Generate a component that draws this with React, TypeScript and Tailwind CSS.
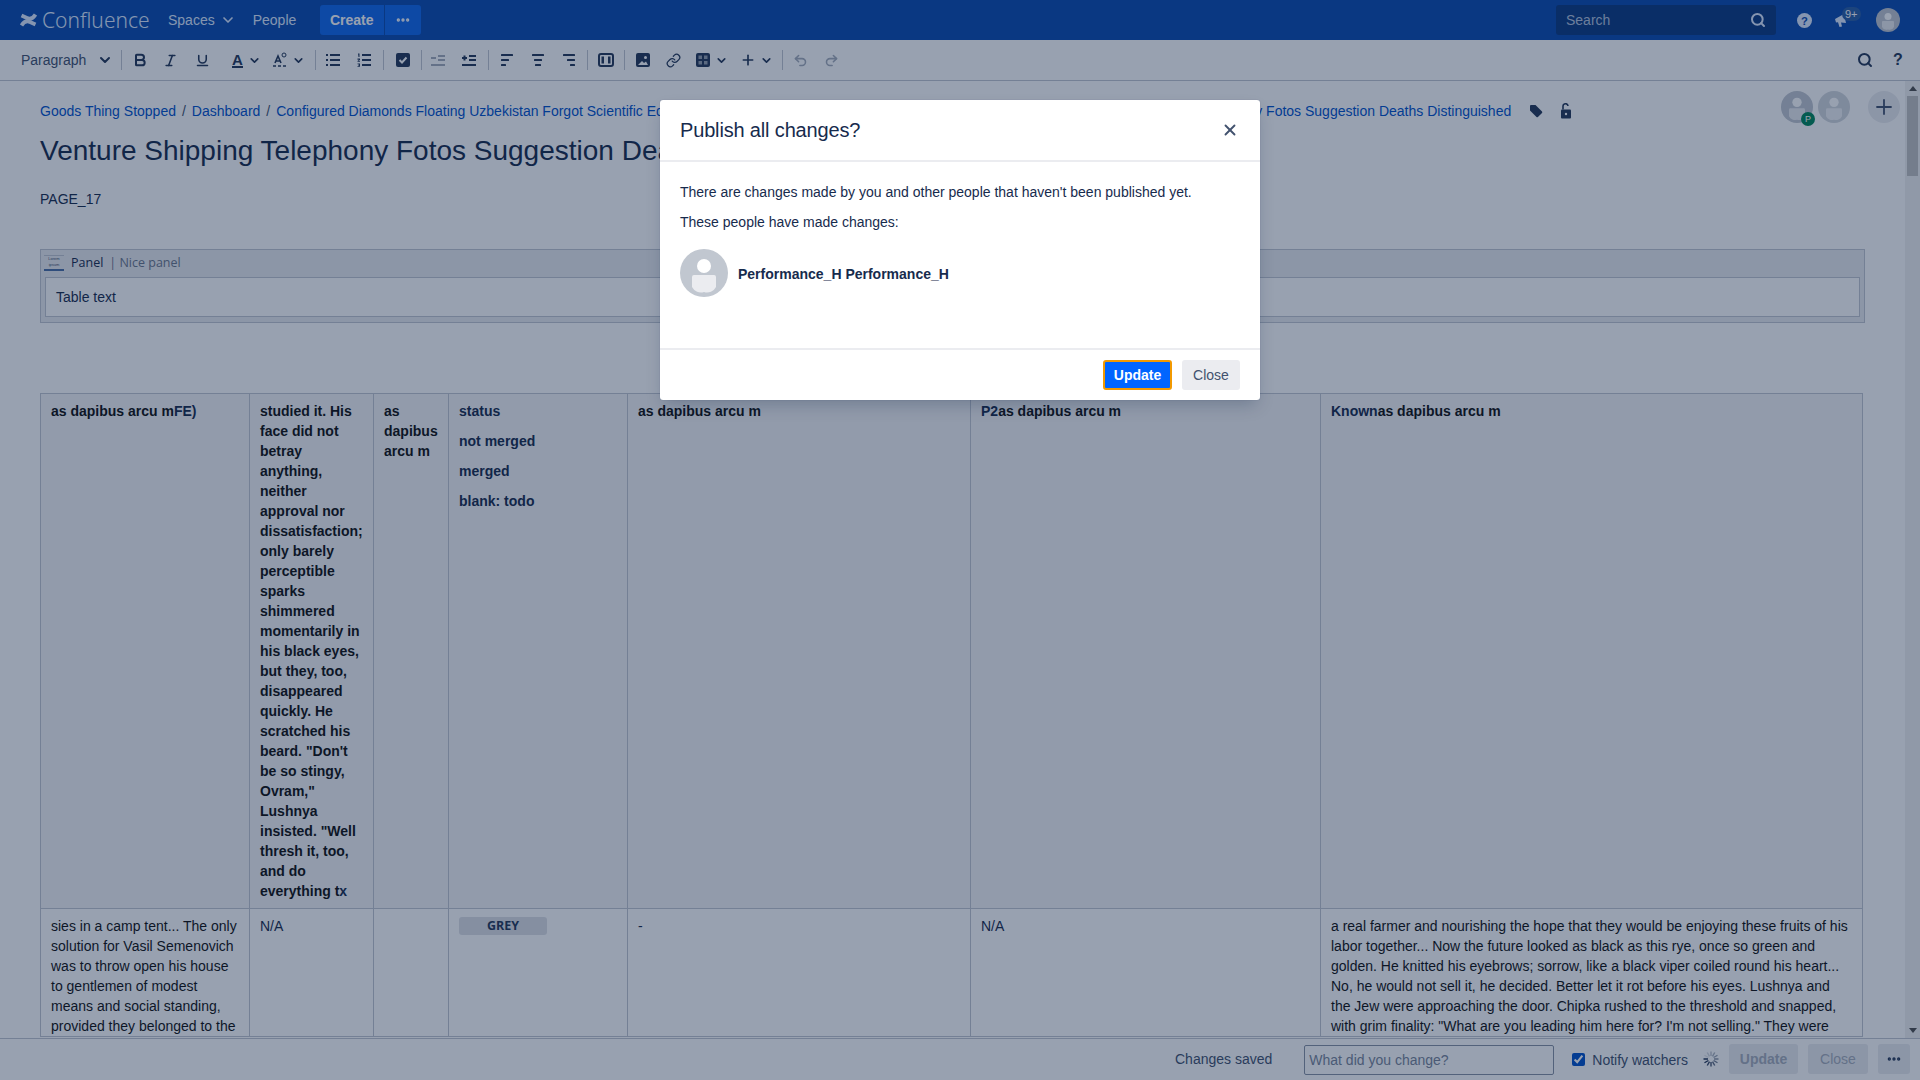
import { Bold, ChevronDown, Ellipsis, Italic, Link, Plus, Redo2, Search, Undo2, Underline, X } from "lucide-react";
import type { ReactNode } from "react";

const font = "font-['Liberation_Sans',Arial,sans-serif]";

function Avatar({ size }: { size: number }) {
    return (
        <svg width={size} height={size} viewBox="0 0 48 48">
            <circle cx="24" cy="24" r="24" fill="#c1c7d0" />
            <circle cx="24" cy="17" r="7" fill="#fff" />
            <path d="M12 28a2 2 0 0 1 2-2h20a2 2 0 0 1 2 2v10a10 10 0 0 1-12 5 10 10 0 0 1-12-5z" fill="#ebecf0" />
        </svg>
    );
}

function Logo() {
    return (
        <svg width="17" height="16" viewBox="0 0 17 16" fill="none" stroke="#deebff" strokeWidth="3.8">
            <path d="M1.500 13.500C4 9.500 7 8.500 10 10l5.500 2.500" />
            <path d="M15.500 2.500C13 6.500 10 7.500 7 6L1.500 3.500" />
        </svg>
    );
}

// toolbar button, width comes from the caller because the gaps differ
function Tool({ w, children, faded }: { w: string; children: ReactNode; faded?: boolean }) {
    return <div className={`${w} shrink-0 h-full flex items-center justify-center ${faded ? "text-[#a5adba]" : "text-[#253858]"}`}>{children}</div>;
}

function Sep() {
    return <div className="w-px h-[20px] bg-[#c1c7d0] shrink-0" />;
}

function Lines({ rows }: { rows: [number, number][] }) {
    return (
        <svg width="14" height="14" viewBox="0 0 14 14" fill="currentColor">
            {rows.map(([x, w], i) => (
                <rect key={i} x={x} y={1 + i * 5} width={w} height="2" rx="0.5" />
            ))}
        </svg>
    );
}

function Spinner() {
    return (
        <svg width="16" height="16" viewBox="0 0 16 16">
            {Array.from({ length: 12 }).map((_, i) => (
                <rect key={i} x="7.300" y="0.500" width="1.400" height="4.500" fill="#172b4d" opacity={0.12 + i / 12} transform={`rotate(${i * 30 - 60} 8 8)`} />
            ))}
        </svg>
    );
}

function Header() {
    return (
        <div className="h-10 shrink-0 bg-[#0b4ab0] flex items-center pl-5 pr-[20px] text-[#deebff] text-sm">
            <Logo />
            <span className="ml-[5px] w-[126px] font-['Noto_Sans',sans-serif] text-[21px] font-light leading-none text-[#deebff]">Confluence</span>
            <span className="">Spaces</span>
            <ChevronDown className="ml-[5px] w-4 h-4" strokeWidth={2.5} />
            <span className="ml-[17px] w-[67px]">People</span>
            <div className="h-[30px] w-[64px] bg-[#1068ec] rounded-l-[3px] text-white font-bold flex items-center justify-center">Create</div>
            <div className="h-[30px] w-[36px] ml-px bg-[#1068ec] rounded-r-[3px] text-white flex items-center justify-center">
                <Ellipsis className="w-4 h-4" strokeWidth={3} />
            </div>
            <div className="ml-auto h-[30px] w-[220px] bg-[#0b3982] rounded-[3px] flex items-center justify-between pl-[10px] pr-[10px] text-[#b3c3dd]">
                <span>Search</span>
                <Search className="w-4 h-4 text-[#deebff]" strokeWidth={3} />
            </div>
            <svg className="ml-[21px]" width="15" height="15" viewBox="0 0 16 16">
                <circle cx="8" cy="8" r="8" fill="#deebff" />
                <text x="8" y="12.500" textAnchor="middle" fontSize="12" fontWeight="700" fill="#0b4ab0" fontFamily="Liberation Sans">?</text>
            </svg>
            <div className="relative ml-[22px] w-[24px] h-6 flex items-center">
                <svg width="14" height="14" viewBox="0 0 14 14" fill="#deebff">
                    <path d="M1 6l9-5 2 9-5-.5 1 4-2.500.5L4 9.200 2 9.500z" />
                </svg>
                <span className="absolute left-[8px] top-[-1px] h-[14px] px-[3px] rounded-full bg-[#2a5fa8] text-[11px] leading-[14px] text-white">9+</span>
            </div>
            <div className="ml-[18px]"><Avatar size={24} /></div>
        </div>
    );
}

function Toolbar() {
    return (
        <div className="h-[41px] shrink-0 border-b border-[#c1c7d0] flex items-center pl-[21px] pr-[6px] text-[#42526e] text-sm">
            <span className="w-[76px] text-[#42526e]">Paragraph</span>
            <ChevronDown className="w-4 h-4 mr-[8px] text-[#253858]" strokeWidth={3} />
            <Sep />
            <div className="ml-[2px]" />
            <Tool w="w-[31px]"><Bold className="w-4 h-4" strokeWidth={3} /></Tool>
            <Tool w="w-[31px]"><Italic className="w-[15px] h-[15px]" strokeWidth={2.5} /></Tool>
            <Tool w="w-[32px]"><Underline className="w-[15px] h-[15px]" strokeWidth={2.5} /></Tool>
            <Tool w="w-[49px]">
                <div className="w-full flex items-center pl-[14px]">
                    <div className="font-bold leading-[13px] text-[15px] border-b-2 border-[#253858]">A</div>
                    <ChevronDown className="ml-[5px] w-[13px] h-[13px] shrink-0" strokeWidth={3} />
                </div>
            </Tool>
            <Tool w="w-[44px]">
                <div className="w-full flex items-center pl-[5px]">
                    <svg className="shrink-0" width="16" height="16" viewBox="0 0 16 16" fill="none" stroke="currentColor" strokeWidth="1.600">
                        <path d="M3 11l3-7 3 7M4 9h4" />
                        <path d="M1 14h3M6 14h3M11 14h3" />
                        <circle cx="12" cy="3" r="2" strokeWidth="1" />
                    </svg>
                    <ChevronDown className="ml-[4px] w-[13px] h-[13px] shrink-0" strokeWidth={3} />
                </div>
            </Tool>
            <div className="ml-[4px]" />
            <Sep />
            <Tool w="w-[34px]">
                <svg width="14" height="14" viewBox="0 0 14 14" fill="currentColor">
                    {[1, 6, 11].map((y) => (
                        <g key={y}>
                            <rect x="0" y={y} width="2" height="2" />
                            <rect x="4" y={y} width="10" height="2" />
                        </g>
                    ))}
                </svg>
            </Tool>
            <Tool w="w-[28px]">
                <svg width="14" height="14" viewBox="0 0 14 14" fill="currentColor">
                    <rect x="5" y="1" width="9" height="2" /><rect x="5" y="6" width="9" height="2" /><rect x="5" y="11" width="9" height="2" />
                    <path d="M1 .5h1.500v3.500h-1zM.5 5.500h2.500v1.500l-1.500 1h1.500v.8H.5V8l1.500-1.200H.5zM.5 10.500h2.500v3.300H.5V13h1.500v-.5H1v-.7h1v-.5H.5z" />
                </svg>
            </Tool>
            <div className="ml-[5px]" />
            <Sep />
            <Tool w="w-[37px]">
                <svg width="14" height="14" viewBox="0 0 14 14">
                    <rect width="14" height="14" rx="2" fill="currentColor" />
                    <path d="M3.500 7l2.500 2.500 4.500-5" stroke="#fff" strokeWidth="2" fill="none" />
                </svg>
            </Tool>
            <Sep />
            <Tool w="w-[32px]" faded>
                <svg width="14" height="14" viewBox="0 0 14 14" fill="currentColor">
                    <rect x="7" y="2" width="7" height="2" /><rect x="7" y="6" width="7" height="2" /><rect x="0" y="11" width="14" height="2" /><rect x="0" y="4" width="5" height="2" />
                </svg>
            </Tool>
            <Tool w="w-[30px]">
                <svg width="14" height="14" viewBox="0 0 14 14" fill="currentColor">
                    <rect x="7" y="2" width="7" height="2" /><rect x="7" y="6" width="7" height="2" /><rect x="0" y="11" width="14" height="2" /><rect x="0" y="4" width="5" height="2" /><rect x="1.500" y="2.500" width="2" height="5" />
                </svg>
            </Tool>
            <div className="ml-[4px]" />
            <Sep />
            <Tool w="w-[36px]"><Lines rows={[[1, 12], [1, 8], [1, 5]]} /></Tool>
            <Tool w="w-[26px]"><Lines rows={[[1, 12], [3, 8], [4, 6]]} /></Tool>
            <Tool w="w-[36px]"><Lines rows={[[1, 12], [5, 8], [8, 5]]} /></Tool>
            <Sep />
            <Tool w="w-[36px]">
                <svg width="16" height="14" viewBox="0 0 16 14" fill="none">
                    <rect x="1" y="1" width="14" height="12" rx="2" stroke="currentColor" strokeWidth="2" />
                    <rect x="3.500" y="3.500" width="2.500" height="7" fill="currentColor" />
                    <rect x="10" y="3.500" width="2.500" height="7" fill="currentColor" />
                </svg>
            </Tool>
            <Sep />
            <Tool w="w-[35px]">
                <svg width="14" height="14" viewBox="0 0 14 14">
                    <rect width="14" height="14" rx="2" fill="currentColor" />
                    <circle cx="9.500" cy="4.500" r="1.500" fill="#fff" />
                    <path d="M2 12l4-4 2 2 2-1.500 2 3.500z" fill="#fff" />
                </svg>
            </Tool>
            <Tool w="w-[26px]"><Link className="w-[15px] h-[15px]" strokeWidth={2} /></Tool>
            <Tool w="w-[44px]">
                <div className="w-full flex items-center pl-[10px]">
                    <svg className="shrink-0" width="14" height="14" viewBox="0 0 14 14" fill="none">
                        <rect width="14" height="14" rx="2" fill="currentColor" />
                        <rect x="2.500" y="2.500" width="3.500" height="3.500" fill="#97a0af" /><rect x="8" y="2.500" width="3.500" height="3.500" fill="#97a0af" /><rect x="2.500" y="8" width="3.500" height="3.500" fill="#97a0af" /><rect x="8" y="8" width="3.500" height="3.500" fill="#97a0af" />
                    </svg>
                    <ChevronDown className="ml-[5px] w-[13px] h-[13px] shrink-0" strokeWidth={3} />
                </div>
            </Tool>
            <Tool w="w-[52px]">
                <div className="w-full flex items-center pl-[10px]">
                    <Plus className="w-4 h-4 shrink-0" strokeWidth={2.5} />
                    <ChevronDown className="ml-[4px] w-[13px] h-[13px] shrink-0" strokeWidth={3} />
                </div>
            </Tool>
            <Sep />
            <Tool w="w-[35px]" faded><Undo2 className="w-[15px] h-[15px]" strokeWidth={2.5} /></Tool>
            <Tool w="w-[26px]" faded><Redo2 className="w-[15px] h-[15px]" strokeWidth={2.5} /></Tool>
            <div className="ml-auto flex items-center h-full">
                <Tool w="w-[34px]"><Search className="w-4 h-4" strokeWidth={3} /></Tool>
                <Tool w="w-[32px]"><span className="font-bold text-base">?</span></Tool>
            </div>
        </div>
    );
}

function Breadcrumbs() {
    return (
        <div className="absolute left-[40px] top-[14px] right-0 h-8 flex items-center text-sm text-[#0052cc]">
            <span>Goods Thing Stopped</span>
            <span className="mx-[6px] text-[#42526e]">/</span>
            <span>Dashboard</span>
            <span className="mx-[6px] text-[#42526e]">/</span>
            <span className="w-[1235px] whitespace-nowrap overflow-hidden flex justify-between">
                <span>Configured Diamonds Floating Uzbekistan Forgot Scientific Equipment</span>
                <span>Venture Shipping Telephony Fotos Suggestion Deaths Distinguished</span>
            </span>
            <svg className="ml-[18px]" width="14" height="14" viewBox="0 0 14 14" fill="#253858">
                <path d="M1 2a1 1 0 0 1 1-1h4.500l6.500 6.500a1 1 0 0 1 0 1.400l-4.100 4.100a1 1 0 0 1-1.400 0L1 6.500z" />
            </svg>
            <svg className="ml-[17px]" width="12" height="16" viewBox="0 0 12 16" fill="none">
                <rect x="1" y="6.500" width="10" height="9" rx="1" fill="#253858" />
                <path d="M3 6.500V3.500a2.500 2.500 0 0 1 5-.5" stroke="#253858" strokeWidth="1.600" />
                <circle cx="6" cy="11" r="1.200" fill="#fff" />
            </svg>
            <div className="ml-auto mr-[5px] mb-[8px] flex items-center">
                <div className="relative">
                    <Avatar size={32} />
                    <span className="absolute right-[-2px] bottom-[-3px] w-[14px] h-[14px] rounded-full bg-[#00875a] text-white text-[9px] leading-[14px] text-center">P</span>
                </div>
                <div className="ml-[5px] opacity-70"><Avatar size={32} /></div>
                <div className="ml-[18px] w-8 h-8 rounded-full bg-[#ebecf0] flex items-center justify-center text-[#42526e]">
                    <Plus className="w-6 h-6" strokeWidth={1.8} />
                </div>
            </div>
        </div>
    );
}

function Content() {
    const th = "border border-[#c1c7d0] bg-[#f4f5f7] align-top pt-[7px] pb-[7px] px-[10px] font-bold text-left";
    const td = "border border-[#c1c7d0] align-top pt-[7px] px-[10px] text-left";
    return (
        <div className="relative flex-1 min-w-0 overflow-hidden pl-[40px] pr-[40px] text-sm leading-5 text-[#172b4d]">
            <Breadcrumbs />
            <div className="pt-[50px] text-[28px] leading-10 whitespace-nowrap">Venture Shipping Telephony Fotos Suggestion Deaths Distinguished</div>
            <div className="mt-[18px]">PAGE_17</div>
            <div className="mt-[40px] h-[74px] border border-[#c1c7d0] bg-[#ebecf0] px-[4px]">
                <div className="h-[26px] mb-px flex items-center font-['Open_Sans',sans-serif] text-[12.5px]">
                    <div className="w-[20px] h-[16px] ml-[-1px] border-b-2 border-[#4a6fa5] border-t border-t-[#c1c7d0] text-[4px] leading-[6px] text-center text-[#42526e] font-['Liberation_Sans',sans-serif]">Lorem ipsum</div>
                    <span className="ml-[7px] text-[#172b4d]">Panel</span>
                    <span className="ml-[6px] text-[#6b778c]">| Nice panel</span>
                </div>
                <div className="h-[40px] border border-[#c1c7d0] bg-white px-[10px] flex items-center">Table text</div>
            </div>
            <table className="mt-[70px] table-fixed border-collapse w-[1822px]">
                <colgroup>
                    <col className="w-[209px]" />
                    <col className="w-[124px]" />
                    <col className="w-[75px]" />
                    <col className="w-[179px]" />
                    <col className="w-[343px]" />
                    <col className="w-[350px]" />
                    <col className="w-[542px]" />
                </colgroup>
                <tbody>
                    <tr>
                        <th className={th}><span className="text-[#111]">as dapibus arcu m</span>FE)</th>
                        <th className={th}>
                            <span className="text-[#111]">studied it. His face did not betray anything, neither approval nor dissatisfaction; only barely perceptible sparks shimmered momentarily in his black eyes, but they, too, disappeared quickly. He scratched his beard. "Don't be so stingy, Ovram," Lushnya insisted. "Well thresh it, too, and do everything t</span>x
                        </th>
                        <th className={`${th} text-[#111]`}>as dapibus arcu m</th>
                        <th className={th}>
                            <p>status</p>
                            <p className="mt-[10px]">not merged</p>
                            <p className="mt-[10px]">merged</p>
                            <p className="mt-[10px]">blank: todo</p>
                        </th>
                        <th className={`${th} text-[#111]`}>as dapibus arcu m</th>
                        <th className={th}>P2<span className="text-[#111]">as dapibus arcu m</span></th>
                        <th className={th}>Known<span className="text-[#111]">as dapibus arcu m</span></th>
                    </tr>
                    <tr>
                        <td className={`${td} text-[#111]`}>
                            sies in a camp tent... The only solution for Vasil Semenovich was to throw open his house to gentlemen of modest means and social standing, provided they belonged to the
                        </td>
                        <td className={td}>N/A</td>
                        <td className={td}></td>
                        <td className={td}>
                            <div className="w-[88px] h-[18px] mt-px rounded-[3px] bg-[#dfe1e6] text-[#253858] text-[12.5px] leading-[18px] font-bold text-center font-['Open_Sans',sans-serif]">GREY</div>
                        </td>
                        <td className={td}>-</td>
                        <td className={td}>N/A</td>
                        <td className={`${td} text-[#111]`}>
                            a real farmer and nourishing the hope that they would be enjoying these fruits of his labor together... Now the future looked as black as this rye, once so green and golden. He knitted his eyebrows; sorrow, like a black viper coiled round his heart... No, he would not sell it, he decided. Better let it rot before his eyes. Lushnya and the Jew were approaching the door. Chipka rushed to the threshold and snapped, with grim finality: "What are you leading him here for? I'm not selling." They were
                        </td>
                    </tr>
                </tbody>
            </table>
        </div>
    );
}

function Scrollbar() {
    return (
        <div className="w-[15px] shrink-0 bg-[#f1f1f1] flex flex-col items-center">
            <div className="h-[15px] flex items-center justify-center">
                <div className="w-0 h-0 border-x-[4px] border-x-transparent border-b-[5px] border-b-[#505050]" />
            </div>
            <div className="w-[11px] h-[80px] bg-[#c1c1c1]" />
            <div className="flex-1" />
            <div className="h-[15px] flex items-center justify-center">
                <div className="w-0 h-0 border-x-[4px] border-x-transparent border-t-[5px] border-t-[#505050]" />
            </div>
        </div>
    );
}

function Footer() {
    const disabled = "h-[30px] rounded-[3px] bg-[#ebecf0] text-[#a5adba] flex items-center justify-center shrink-0";
    return (
        <div className="h-[42px] shrink-0 bg-white border-t border-[#c1c7d0] flex items-center justify-end pr-[10px] pb-px text-sm text-[#42526e]">
            <span>Changes saved</span>
            <input placeholder="What did you change?" className="ml-[32px] mt-[2px] w-[250px] h-[30px] border border-[#8993a4] rounded-[2px] px-[4px] text-sm placeholder:text-[#7a869a] bg-white" />
            <input type="checkbox" defaultChecked className="ml-[18px] w-[13px] h-[13px] accent-[#0052cc]" />
            <span className="ml-[7px] mt-[2px]">Notify watchers</span>
            <div className="ml-[15px] w-[16px]"><Spinner /></div>
            <div className={`ml-[10px] w-[69px] font-bold ${disabled}`}>Update</div>
            <div className={`ml-[10px] w-[60px] ${disabled}`}>Close</div>
            <div className={`ml-[10px] w-[32px] ${disabled}`}>
                <Ellipsis className="w-4 h-4 text-[#253858]" strokeWidth={3} />
            </div>
        </div>
    );
}

function PublishDialog() {
    return (
        <div className="absolute inset-0 bg-[#091e42]/[0.42] flex justify-center items-start pt-[100px]">
            <div className="w-[600px] h-[300px] bg-white rounded-[3px] shadow-[0_8px_16px_-4px_rgba(9,30,66,0.25),0_0_1px_rgba(9,30,66,0.31)] flex flex-col text-sm text-[#172b4d]">
                <div className="h-[62px] shrink-0 border-b-2 border-[#ebecf0] pl-5 pr-[20px] flex items-center justify-between">
                    <h1 className="text-xl tracking-[-0.008em]">Publish all changes?</h1>
                    <X className="w-[18px] h-[18px] mr-px text-[#42526e]" strokeWidth={2.5} />
                </div>
                <div className="flex-1 pl-5 pt-5 leading-5">
                    <p>There are changes made by you and other people that haven't been published yet.</p>
                    <p className="mt-[10px]">These people have made changes:</p>
                    <div className="mt-[17px] flex items-center gap-[10px]">
                        <Avatar size={48} />
                        <span className="font-bold mt-[2px]">Performance_H Performance_H</span>
                    </div>
                </div>
                <div className="h-[52px] shrink-0 border-t-2 border-[#ebecf0] pr-5 flex items-center justify-end">
                    <button className="w-[69px] h-[30px] rounded-[3px] bg-[#0065ff] border-2 border-[#f29900] text-white font-bold">Update</button>
                    <button className="ml-[10px] w-[58px] h-[30px] rounded-[3px] bg-[#ebecf0] text-[#42526e]">Close</button>
                </div>
            </div>
        </div>
    );
}

export default function App() {
    return (
        <div className={`relative w-screen h-screen overflow-hidden bg-white flex flex-col ${font}`}>
            <Header />
            <Toolbar />
            <div className="flex flex-1 min-h-0">
                <Content />
                <Scrollbar />
            </div>
            <Footer />
            <PublishDialog />
        </div>
    );
}
